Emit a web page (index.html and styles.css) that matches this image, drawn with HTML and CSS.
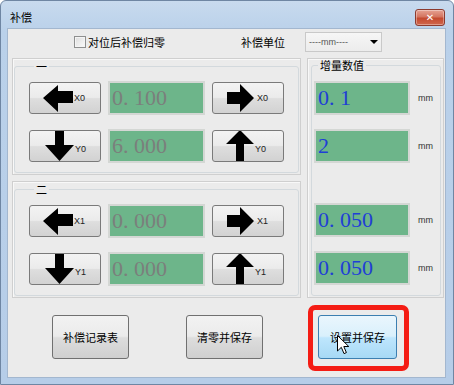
FILE: index.html
```html
<!DOCTYPE html>
<html>
<head lang="zh">
    <meta charset="UTF-8">
    <title>补偿</title>
    <link rel="stylesheet" href="styles.css">
</head>
<body>
<div class="window">
    <div class="titlebar">
        <span class="title">补偿</span>
        <span class="close">&#x2715;</span>
    </div>
    <div class="client">
        <div class="toprow">
            <label class="check"><span class="box"></span>对位后补偿归零</label>
            <span class="unit-label">补偿单位</span>
            <div class="select"><span>----mm----</span><span class="caret"></span></div>
        </div>

        <div class="main">
            <div class="left">
                <div class="panel">
                    <fieldset class="group">
                        <legend>一</legend>
                        <div class="grid">
                            <div class="btn btn-left">
                                <svg width="30" height="27" viewBox="0 0 30 27"><polygon points="0,13 15,0 15,6 30,6 30,18 15,18 15,27"/></svg>
                                <span class="axis">X0</span>
                            </div>
                            <div class="field dim">0. 100</div>
                            <div class="btn btn-right">
                                <svg width="27" height="28" viewBox="0 0 27 28"><polygon points="27,14 13,0 13,8 0,8 0,20 13,20 13,28"/></svg>
                                <span class="axis">X0</span>
                            </div>
                            <div class="btn btn-down">
                                <svg width="29" height="31" viewBox="0 0 29 31"><polygon points="10,0 19,0 19,15 29,15 14.5,31 0,15 10,15"/></svg>
                                <span class="axis low">Y0</span>
                            </div>
                            <div class="field dim">6. 000</div>
                            <div class="btn btn-up">
                                <svg width="28" height="31" viewBox="0 0 28 31"><polygon points="14,0 28,14 18,14 18,31 10,31 10,14 0,14"/></svg>
                                <span class="axis low">Y0</span>
                            </div>
                        </div>
                    </fieldset>
                </div>
                <div class="panel">
                    <fieldset class="group">
                        <legend>二</legend>
                        <div class="grid">
                            <div class="btn btn-left">
                                <svg width="30" height="27" viewBox="0 0 30 27"><polygon points="0,13 15,0 15,6 30,6 30,18 15,18 15,27"/></svg>
                                <span class="axis">X1</span>
                            </div>
                            <div class="field dim">0. 000</div>
                            <div class="btn btn-right">
                                <svg width="27" height="28" viewBox="0 0 27 28"><polygon points="27,14 13,0 13,8 0,8 0,20 13,20 13,28"/></svg>
                                <span class="axis">X1</span>
                            </div>
                            <div class="btn btn-down">
                                <svg width="29" height="31" viewBox="0 0 29 31"><polygon points="10,0 19,0 19,15 29,15 14.5,31 0,15 10,15"/></svg>
                                <span class="axis low">Y1</span>
                            </div>
                            <div class="field dim">0. 000</div>
                            <div class="btn btn-up">
                                <svg width="28" height="31" viewBox="0 0 28 31"><polygon points="14,0 28,14 18,14 18,31 10,31 10,14 0,14"/></svg>
                                <span class="axis low">Y1</span>
                            </div>
                        </div>
                    </fieldset>
                </div>
            </div>

            <div class="panel right">
                <fieldset class="group step">
                    <legend>增量数值</legend>
                    <div class="pair">
                        <div class="field val">0. 1</div><span class="mm">mm</span>
                        <div class="field val">2</div><span class="mm">mm</span>
                    </div>
                    <div class="pair second">
                        <div class="field val">0. 050</div><span class="mm">mm</span>
                        <div class="field val">0. 050</div><span class="mm">mm</span>
                    </div>
                </fieldset>
            </div>
        </div>

        <div class="actions">
            <div class="cmd first">补偿记录表</div>
            <div class="cmd second">清零并保存</div>
            <div class="mark">
                <div class="cmd hot">设置并保存</div>
                <svg class="cursor" width="13" height="20" viewBox="0 0 13 20"><path d="M0.5 0.5 L0.5 16 L4.3 12.3 L7 18.6 L9.4 17.6 L6.8 11.5 L11.8 11.5 Z" fill="#fff" stroke="#000" stroke-width="1"/></svg>
            </div>
        </div>
    </div>
</div>
</body>
</html>
```

FILE: styles.css
```css
*{
    margin: 0;
    padding: 0;
    box-sizing: border-box;
}
body{
    width: 454px;
    height: 385px;
    overflow: hidden;
    font-family: "Noto Sans CJK SC", sans-serif;
    font-size: 11px;
    color: #000;
    background: #fff;
}
.window{
    width: 454px;
    height: 385px;
    border: 1px solid #6f86a3;
    border-radius: 6px 6px 0 0;
    background: linear-gradient(#c8daee, #bad1ea 30px, #b6cde8);
    padding: 0 7px 6px 6px;
    display: flex;
    flex-direction: column;
}
.titlebar{
    height: 27px;
    display: flex;
    align-items: flex-start;
}
.title{
    margin: 9px 0 0 3px;
    line-height: 14px;
    font-size: 11px;
    flex: 1;
}
.close{
    margin: 8px 1px 0 0;
    width: 30px;
    height: 17px;
    border: 1px solid #8c3b2f;
    border-radius: 3px;
    background: linear-gradient(#e6a293, #d47560 45%, #c44a30 55%, #d0674d);
    color: #fff;
    font-family: "DejaVu Sans", sans-serif;
    font-weight: bold;
    font-size: 10px;
    line-height: 15px;
    text-align: center;
    box-shadow: inset 0 0 0 1px rgba(255,255,255,.35);
}
.client{
    flex: 1;
    background: #ebebeb;
    border: 1px solid #a3b7cf;
    display: flex;
    flex-direction: column;
}

/* top row */
.toprow{
    height: 26px;
    display: flex;
    align-items: center;
    padding-left: 66px;
}
.check{
    display: flex;
    align-items: center;
    font-size: 11px;
}
.check .box{
    width: 12px;
    height: 12px;
    border: 1px solid #8e8f8f;
    background: linear-gradient(135deg, #dcdcdc, #fbfbfb);
    box-shadow: inset 0 0 0 1px #f4f4f4;
    margin-right: 2px;
}
.unit-label{
    margin-left: 76px;
}
.select{
    margin-left: 20px;
    width: 77px;
    height: 20px;
    border: 1px solid #c9c9c9;
    background: linear-gradient(#f6f6f6, #ececec);
    display: flex;
    align-items: center;
    padding-left: 3px;
    font-family: "Liberation Sans", sans-serif;
    font-size: 9px;
    color: #555;
}
.select span:first-child{
    flex: 1;
}
.caret{
    width: 0;
    height: 0;
    border-left: 4px solid transparent;
    border-right: 4px solid transparent;
    border-top: 4px solid #000;
    margin-right: 3px;
}

/* panels */
.main{
    margin-top: 3px;
    display: flex;
    padding-left: 4px;
    height: 240px;
}
.left{
    width: 289px;
    display: flex;
    flex-direction: column;
    gap: 6px;
}
.panel{
    border: 1px solid #cfcfcf;
    box-shadow: inset 1px 1px 0 #f8f8f8;
    display: flex;
    flex-direction: column;
}
.left .panel{
    height: 117px;
}
.panel.right{
    width: 137px;
    margin-left: 6px;
}
.group{
    flex: 1;
    margin: 1px 1px 1px 1px;
    border: 1px solid #d3d9dd;
    border-radius: 3px;
    padding: 9px 0 0 14px;
    min-width: 0;
}
.group legend{
    font-size: 11px;
    line-height: 12px;
    padding: 0 2px;
    margin-left: 5px;
}
.grid{
    display: grid;
    grid-template-columns: 72px 97px 72px;
    grid-template-rows: 34px 34px;
    column-gap: 7px;
    row-gap: 14px;
}

/* arrow buttons */
.btn{
    align-self: center;
    height: 32px;
    border: 1px solid #7a7a7a;
    border-radius: 3px;
    background: linear-gradient(#f3f3f3, #ebebeb 48%, #dedede 52%, #d2d2d2);
    display: flex;
    align-items: center;
    overflow: hidden;
}
.btn svg{
    flex: none;
}
.btn-left{
    padding-left: 13px;
}
.btn-right{
    padding-left: 14px;
}
.btn-down{
    padding-left: 15px;
    align-items: flex-end;
}
.btn-up{
    padding-left: 13px;
    align-items: flex-end;
}
.axis{
    font-family: "Liberation Sans", sans-serif;
    font-size: 9px;
    color: #222;
    margin-left: 1px;
    line-height: 10px;
}
.btn-right .axis{
    margin-left: 3px;
}
.axis.low{
    align-self: center;
    margin-top: 5px;
}

/* value fields */
.field{
    height: 34px;
    border: 2px solid #d4d7d4;
    background: #6db58a;
    font-family: "Liberation Serif", serif;
    font-size: 22px;
    line-height: 30px;
    padding-left: 2px;
    white-space: pre;
}
.field.dim{
    color: #7b7f7c;
}
.field.val{
    color: #1f3fd6;
}
.step{
    margin: 0 2px 1px 3px;
    padding: 10px 0 0 2px;
}
.step legend{
    margin-left: 4px;
}
.pair{
    display: grid;
    grid-template-columns: 96px auto;
    grid-template-rows: 34px 34px;
    row-gap: 14px;
    column-gap: 8px;
    align-items: center;
}
.pair.second{
    margin-top: 40px;
}
.mm{
    font-family: "Liberation Sans", sans-serif;
    font-size: 9px;
    color: #333;
}

/* bottom commands */
.actions{
    display: flex;
    align-items: flex-start;
    padding-top: 7px;
}
.cmd{
    width: 77px;
    height: 44px;
    border: 1px solid #707070;
    border-radius: 3px;
    background: linear-gradient(#f2f2f2, #ebebeb 48%, #dddddd 52%, #cfcfcf);
    display: flex;
    align-items: center;
    justify-content: center;
    font-size: 11px;
    margin-top: 10px;
}
.cmd.first{
    margin-left: 44px;
}
.cmd.second{
    margin-left: 57px;
}
.mark{
    position: relative;
    margin-left: 45px;
    width: 101px;
    height: 66px;
    border: 5px solid #f41c14;
    border-radius: 7px;
    padding: 5px 0 0 5px;
}
.cmd.hot{
    margin-top: 0;
    width: 79px;
    border-color: #3c7fb1;
    background: linear-gradient(#eaf6fd, #d9f0fc 48%, #bee6fd 52%, #a7d9f5);
}
.cursor{
    position: absolute;
    left: 24px;
    top: 25px;
}
```
